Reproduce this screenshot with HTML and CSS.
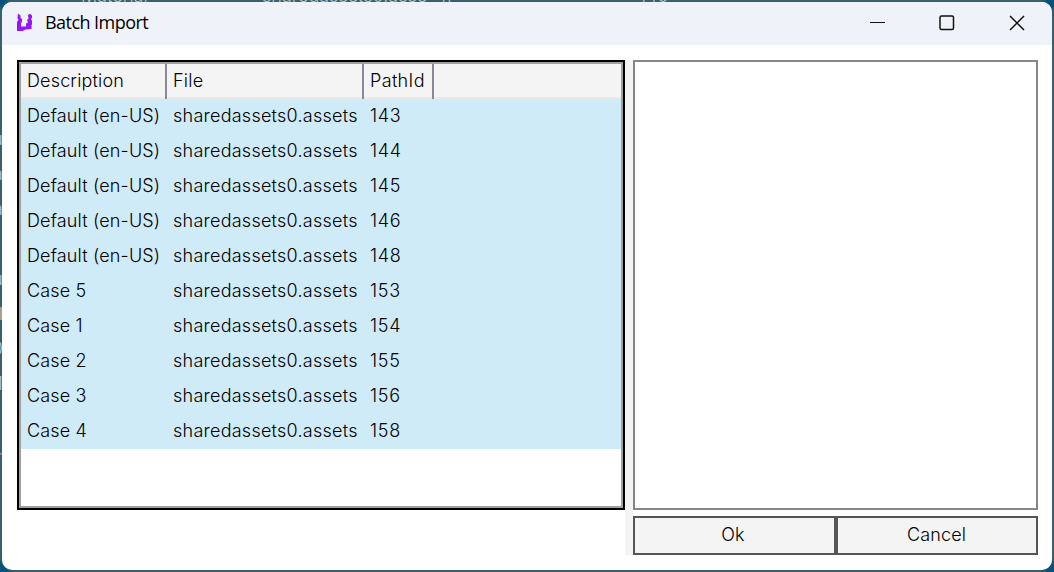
FILE: index.html
```html
<!DOCTYPE html>
<html lang="en">
<head>
<meta charset="utf-8">
<title>Batch Import</title>
<link rel="stylesheet" href="styles.css">
</head>
<body>
<div class="backdrop" aria-hidden="true">
  <span class="behind b1">Material</span>
  <span class="behind b2">sharedassets0.asse</span>
  <span class="behind b3">fl</span>
  <span class="behind b4">140</span>
  <span class="edge e1">u</span>
  <span class="edge e2">a</span>
  <span class="edge e3">a</span>
  <span class="edge e4">u</span>
  <i class="chip"></i>
  <span class="edge e5">0</span>
  <span class="edge e6">1</span>
  <span class="edge e7">r</span>
</div>
<main class="window">
  <header class="titlebar">
    <svg class="logo" width="18" height="20" viewBox="0 0 18 20"><path d="M2 .5L4.500 2.500V5L6 6V9L5 10V13.500H10V10.500L12 9.500L11 7L12.500 5.500L12 2L14 .8L16 2.500V5L15 6L16 8V11.500L15.500 12V16L9.500 16.500L6.500 18H1V9L2.500 7L1.500 5Z" fill="#9415f5"/></svg>
    <h1 class="title">Batch Import</h1>
    <div class="controls">
      <svg class="minimize" width="16" height="16" viewBox="0 0 16 16"><path d="M1 7.500H16" /></svg>
      <svg width="16" height="16" viewBox="0 0 16 16"><rect x="1" y="1" width="13.500" height="13.500" rx="1.500"/></svg>
      <svg width="16" height="16" viewBox="0 0 16 16"><path d="M1 1L15 15M15 1L1 15"/></svg>
    </div>
  </header>
  <div class="content">
    <div class="grid-frame">
      <div class="grid">
        <div class="row head"><span>Description</span><span>File</span><span>PathId</span></div>
        <div class="row"><span>Default (en-US)</span><span>sharedassets0.assets</span><span>143</span></div>
        <div class="row"><span>Default (en-US)</span><span>sharedassets0.assets</span><span>144</span></div>
        <div class="row"><span>Default (en-US)</span><span>sharedassets0.assets</span><span>145</span></div>
        <div class="row"><span>Default (en-US)</span><span>sharedassets0.assets</span><span>146</span></div>
        <div class="row"><span>Default (en-US)</span><span>sharedassets0.assets</span><span>148</span></div>
        <div class="row"><span>Case 5</span><span>sharedassets0.assets</span><span>153</span></div>
        <div class="row"><span>Case 1</span><span>sharedassets0.assets</span><span>154</span></div>
        <div class="row"><span>Case 2</span><span>sharedassets0.assets</span><span>155</span></div>
        <div class="row"><span>Case 3</span><span>sharedassets0.assets</span><span>156</span></div>
        <div class="row"><span>Case 4</span><span>sharedassets0.assets</span><span>158</span></div>
      </div>
    </div>
    <div class="splitter"></div>
    <div class="side">
      <div class="list"></div>
      <div class="buttons"><button>Ok</button><button class="cancel">Cancel</button></div>
    </div>
  </div>
</main>
</body>
</html>
```
FILE: styles.css
```css
* { box-sizing: border-box; }
body {
  margin: 0;
  width: 1054px;
  height: 572px;
  overflow: hidden;
  position: relative;
  padding: 2px;
  background: #38616b;
  font: 340 18px/34px Inter, "Open Sans", sans-serif;
  letter-spacing: 0.16px;
  color: #000;
}
.backdrop {
  position: absolute;
  inset: 0;
  background:
    radial-gradient(circle at 100% 0, #07527c 0 7px, transparent 14px),
    radial-gradient(circle at 100% 100%, #07527c 0 7px, transparent 14px),
    radial-gradient(circle at 0 100%, #07527c 0 7px, transparent 14px),
    radial-gradient(circle at 0 0, #07527c 0 4px, transparent 12px);
}
.behind, .edge {
  position: absolute;
  color: #b4c6cb;
  line-height: 20px;
  white-space: nowrap;
}
.behind { top: -14px; letter-spacing: 0; }
.b1 { left: 81px; }
.b2 { left: 262px; }
.b3 { left: 441px; }
.b4 { left: 639px; }
.edge { right: 1051px; }
.e1 { top: 129px; }
.e2 { top: 164px; }
.e3 { top: 199px; }
.e4 { top: 269px; }
.e5 { top: 339px; }
.e6 { top: 374px; }
.e7 { top: 447px; color: #bd8d94; }
.chip {
  position: absolute;
  left: 0;
  top: 307px;
  width: 2px;
  height: 13px;
  background: #a5a08e;
}
.window {
  position: relative;
  display: flex;
  flex-direction: column;
  width: 1050px;
  height: 568px;
  border-radius: 10px;
  background: #fff;
  overflow: hidden;
}
.titlebar {
  display: flex;
  align-items: center;
  height: 43px;
  padding: 0 27px 0 14px;
  background: #eff2f8;
}
.logo { margin-top: -2px; }
.title {
  margin: 0 0 0 11px;
  font: 400 18px/41px "Open Sans", "Noto Sans", sans-serif;
  letter-spacing: -0.55px;
  height: 43px;
}
.controls {
  display: flex;
  gap: 54px;
  margin: -2px 0 0 auto;
}
.controls svg {
  display: block;
  fill: none;
  stroke: #111;
  stroke-width: 1.5;
}
.controls .minimize { stroke-width: 1; }
.content {
  display: flex;
  padding: 15px 14px 15px 15px;
  height: 525px;
}
.grid-frame {
  width: 608px;
  height: 450px;
  border: 2px solid #000;
}
.grid {
  height: 100%;
  border: 2px solid #a0a0a0;
}
.row {
  display: grid;
  grid-template-columns: 146px 197px 70px;
  height: 35px;
  background: #d0ebf8;
  white-space: nowrap;
}
.row span { padding-left: 6px; }
.row span:nth-child(2) { letter-spacing: 0.25px; }
.row span:nth-child(3) { letter-spacing: 0.7px; }
.head {
  background: #f4f4f4;
  box-shadow: inset 0 -2px #e9e9e9;
}
.head span { border-right: 2px solid #888a99; }
.row.head span:nth-child(3) { letter-spacing: 0.35px; }
.splitter {
  width: 8px;
  height: 495px;
  background: #f4f4f4;
}
.side {
  display: flex;
  flex-direction: column;
  gap: 6px;
  width: 405px;
  height: 495px;
}
.list {
  height: 450px;
  border: 2px solid #868686;
}
.buttons {
  display: grid;
  grid-template: 39px / 203px 202px;
  height: 39px;
}
.buttons button {
  padding: 0 3px 2px 0;
  border: 2px solid #555;
  background: #f4f4f4;
  font: inherit;
  line-height: 32px;
  letter-spacing: inherit;
  color: inherit;
}
.buttons .cancel { padding-right: 1px; }
```
